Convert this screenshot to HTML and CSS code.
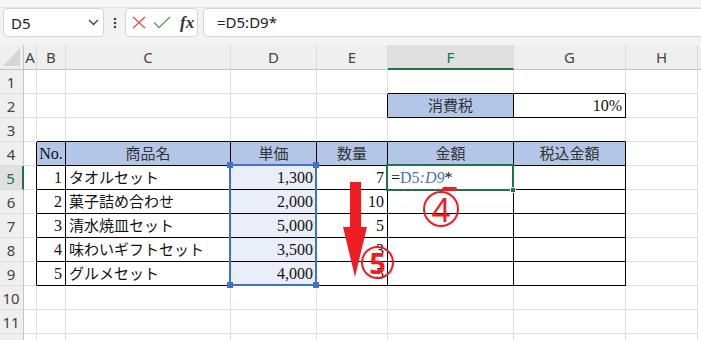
FILE: index.html
```html
<!DOCTYPE html>
<html lang="ja">
<head>
  <meta charset="UTF-8" />
  <meta name="viewport" content="width=device-width, initial-scale=1.0"/>
  <title>税込金額の計算</title>
  <link rel="stylesheet" href="styles.css">
</head>
<body>
  <div class="page">
    <div class="topstrip"></div>

    <!-- formula bar -->
    <div class="fbar">
      <div class="namebox">
        <span>D5</span>
        <svg width="11" height="7" viewBox="0 0 11 7"><polyline points="1,1 5.5,5.5 10,1" fill="none" stroke="#444" stroke-width="1.3"/></svg>
      </div>
      <div class="dots">
        <svg width="4" height="12" viewBox="0 0 4 12"><circle cx="2" cy="2" r="1.3" fill="#444"/><circle cx="2" cy="6" r="1.3" fill="#444"/><circle cx="2" cy="10" r="1.3" fill="#444"/></svg>
      </div>
      <div class="fxbox">
        <svg class="icon-x" width="14" height="13" viewBox="0 0 14 13"><path d="M1,1 L13,12 M13,1 L1,12" stroke="#e05555" stroke-width="1.4" fill="none"/></svg>
        <svg class="icon-ok" width="18" height="13" viewBox="0 0 18 13"><polyline points="1,6.5 6,11.5 17,1" stroke="#5ba85b" stroke-width="1.4" fill="none"/></svg>
        <span class="fx">fx</span>
      </div>
      <div class="formula">=D5:D9*</div>
    </div>

    <!-- sheet -->
    <div class="sheet">
      <div class="row head">
        <div class="corner"><svg width="18" height="19" viewBox="0 0 18 19"><polygon points="17,0 17,18 0,18" fill="#d6d6d6"/></svg></div>
        <div class="ch">A</div>
        <div class="ch">B</div>
        <div class="ch">C</div>
        <div class="ch">D</div>
        <div class="ch">E</div>
        <div class="ch on">F</div>
        <div class="ch">G</div>
        <div class="ch">H</div>
        <div class="ch end"></div>
      </div>

      <div class="row">
        <div class="rh">1</div>
        <div class="c"></div><div class="c"></div><div class="c"></div><div class="c"></div><div class="c"></div>
        <div class="c bb"></div><div class="c bb"></div><div class="c"></div><div class="c end"></div>
      </div>
      <div class="row">
        <div class="rh">2</div>
        <div class="c"></div><div class="c"></div><div class="c"></div><div class="c"></div><div class="c br"></div>
        <div class="c bt hd">消費税</div>
        <div class="c bt n">10%</div>
        <div class="c"></div><div class="c end"></div>
      </div>
      <div class="row">
        <div class="rh">3</div>
        <div class="c"></div>
        <div class="c bb"></div><div class="c bb"></div><div class="c bb"></div><div class="c bb"></div><div class="c bb"></div><div class="c bb"></div>
        <div class="c"></div><div class="c end"></div>
      </div>
      <div class="row">
        <div class="rh">4</div>
        <div class="c br"></div>
        <div class="c bt hd latin">No.</div>
        <div class="c bt hd">商品名</div>
        <div class="c bt hd">単価</div>
        <div class="c bt hd">数量</div>
        <div class="c bt hd">金額</div>
        <div class="c bt hd">税込金額</div>
        <div class="c"></div><div class="c end"></div>
      </div>
      <div class="row">
        <div class="rh on">5</div>
        <div class="c br"></div>
        <div class="c bt n">1</div>
        <div class="c bt t">タオルセット</div>
        <div class="c bt n sel">1,300</div>
        <div class="c bt n">7</div>
        <div class="c bt edit">=<span class="ref">D5<i>:D9</i></span>*</div>
        <div class="c bt"></div>
        <div class="c"></div><div class="c end"></div>
      </div>
      <div class="row">
        <div class="rh">6</div>
        <div class="c br"></div>
        <div class="c bt n">2</div>
        <div class="c bt t">菓子詰め合わせ</div>
        <div class="c bt n sel">2,000</div>
        <div class="c bt n">10</div>
        <div class="c bt"></div><div class="c bt"></div>
        <div class="c"></div><div class="c end"></div>
      </div>
      <div class="row">
        <div class="rh">7</div>
        <div class="c br"></div>
        <div class="c bt n">3</div>
        <div class="c bt t">清水焼皿セット</div>
        <div class="c bt n sel">5,000</div>
        <div class="c bt n">5</div>
        <div class="c bt"></div><div class="c bt"></div>
        <div class="c"></div><div class="c end"></div>
      </div>
      <div class="row">
        <div class="rh">8</div>
        <div class="c br"></div>
        <div class="c bt n">4</div>
        <div class="c bt t">味わいギフトセット</div>
        <div class="c bt n sel">3,500</div>
        <div class="c bt n">3</div>
        <div class="c bt"></div><div class="c bt"></div>
        <div class="c"></div><div class="c end"></div>
      </div>
      <div class="row">
        <div class="rh">9</div>
        <div class="c br"></div>
        <div class="c bt n">5</div>
        <div class="c bt t">グルメセット</div>
        <div class="c bt n sel">4,000</div>
        <div class="c bt n">5</div>
        <div class="c bt"></div><div class="c bt"></div>
        <div class="c"></div><div class="c end"></div>
      </div>
      <div class="row">
        <div class="rh">10</div>
        <div class="c"></div><div class="c"></div><div class="c"></div><div class="c"></div><div class="c"></div>
        <div class="c"></div><div class="c"></div><div class="c"></div><div class="c end"></div>
      </div>
      <div class="row">
        <div class="rh">11</div>
        <div class="c"></div><div class="c"></div><div class="c"></div><div class="c"></div><div class="c"></div>
        <div class="c"></div><div class="c"></div><div class="c"></div><div class="c end"></div>
      </div>
      <div class="row">
        <div class="rh">12</div>
        <div class="c"></div><div class="c"></div><div class="c"></div><div class="c"></div><div class="c"></div>
        <div class="c"></div><div class="c"></div><div class="c"></div><div class="c end"></div>
      </div>
    </div>

    <!-- selection + active cell -->
    <div class="selbox"></div>
    <div class="handle h1"></div>
    <div class="handle h2"></div>
    <div class="handle h3"></div>
    <div class="handle h4"></div>
    <div class="active"></div>
    <div class="fillh"></div>

    <!-- annotations -->
    <div class="dash"></div>
    <svg class="arrow" width="27" height="100" viewBox="0 0 27 100">
      <rect x="8" y="2" width="11" height="48" fill="#ee1d23"/>
      <polygon points="1,47 25,47 13,97" fill="#ee1d23"/>
    </svg>
    <div class="mark m4">4</div>
    <div class="mark m5">5</div>
  </div>
</body>
</html>
```

FILE: styles.css
```css
* {
  box-sizing: border-box;
}

body {
  margin: 0;
  background: #fff;
  overflow: hidden;
}

.page {
  position: relative;
  width: 701px;
  height: 340px;
  overflow: hidden;
  font-family: 'Noto Sans', sans-serif;
}

/* ---------- formula bar ---------- */
.topstrip {
  height: 8px;
  background: #f5f5f5;
  border-bottom: 1px solid #e2e2e2;
}

.fbar {
  display: flex;
  align-items: flex-start;
  height: 37px;
  padding: 0 0 8px 3px;
  background: #f3f3f3;
}

.namebox,
.fxbox,
.formula {
  height: 29px;
  background: #fff;
  border: 1px solid #d4d4d4;
  border-radius: 4px;
}

.namebox {
  width: 101px;
  display: flex;
  align-items: center;
  justify-content: space-between;
  padding: 0 4px 0 7px;
  font-size: 15px;
  color: #222;
}

.dots {
  width: 21px;
  height: 29px;
  display: flex;
  align-items: center;
  justify-content: center;
}

.fxbox {
  width: 73px;
  display: flex;
  align-items: center;
  padding-left: 6px;
}

.icon-ok {
  margin-left: 7px;
}

.fx {
  margin-left: 9px;
  font-family: 'Liberation Serif', serif;
  font-style: italic;
  font-weight: bold;
  font-size: 17px;
  color: #333;
}

.formula {
  flex: 1;
  margin-left: 5px;
  margin-right: -8px;
  padding-left: 13px;
  line-height: 27px;
  font-size: 15px;
  color: #222;
}

/* ---------- sheet ---------- */
.row {
  display: grid;
  grid-template-columns: 24px 13px 29px 165px 86px 71px 126px 112px 72px 1fr;
  height: 24px;
}

.row.head {
  height: 25px;
}

.corner,
.ch,
.rh {
  background: #efefef;
  color: #444;
  font-size: 15px;
  display: flex;
  align-items: center;
  justify-content: center;
}

.corner {
  border-right: 1px solid #c4c4c4;
  border-bottom: 1px solid #c4c4c4;
  align-items: flex-end;
  justify-content: flex-end;
  padding: 0 2px 2px 0;
}

.ch {
  border-right: 1px solid #dcdcdc;
  border-bottom: 1px solid #c4c4c4;
}

.ch.on {
  background: #e0e0e0;
  color: #217346;
  border-bottom: 2px solid #217346;
}

.rh {
  border-right: 1px solid #c4c4c4;
  border-bottom: 1px solid #dcdcdc;
  padding-right: 1px;
}

.rh.on {
  background: #e0e0e0;
  color: #217346;
  border-right: 2px solid #217346;
}

.c {
  border-right: 1px solid #e0e0e0;
  border-bottom: 1px solid #e0e0e0;
  display: flex;
  align-items: flex-end;
  padding: 0 3px 2px 3px;
  font-family: 'Liberation Serif', 'Noto Sans CJK JP', serif;
  font-size: 16px;
  line-height: 18px;
  color: #111;
  white-space: nowrap;
}

.end {
  border: none;
  background: #fff;
}

.ch.end {
  background: #efefef;
  border-bottom: 1px solid #c4c4c4;
}

/* black table borders */
.bt {
  border-right-color: #000;
  border-bottom-color: #000;
}

.bb {
  border-bottom-color: #000;
}

.br {
  border-right-color: #000;
}

.hd {
  background: #b4c6e7;
  justify-content: center;
  font-size: 15px;
  color: #333;
}

.hd.latin {
  font-size: 16px;
  color: #111;
}

.n {
  justify-content: flex-end;
}

.t {
  font-size: 15px;
  padding-left: 3px;
}

.sel {
  background: #e9eef8;
}

.edit {
  padding-left: 3px;
}

.ref {
  color: #3f72c8;
}

.ref i {
  font-style: italic;
}

/* ---------- selection overlays ---------- */
.selbox {
  position: absolute;
  left: 229px;
  top: 164px;
  width: 88px;
  height: 122px;
  border: 2px solid #3f72c8;
}

.handle {
  position: absolute;
  width: 6px;
  height: 6px;
  background: #3f72c8;
}

.h1 { left: 227px; top: 162px; }
.h2 { left: 313px; top: 162px; }
.h3 { left: 227px; top: 282px; }
.h4 { left: 313px; top: 282px; }

.active {
  position: absolute;
  left: 386px;
  top: 164px;
  width: 128px;
  height: 27px;
  border: 2px solid #217346;
}

.fillh {
  position: absolute;
  left: 510px;
  top: 187px;
  width: 6px;
  height: 6px;
  background: #217346;
  border: 1px solid #fff;
}

/* ---------- red annotations ---------- */
.dash {
  position: absolute;
  left: 442px;
  top: 187px;
  width: 15px;
  height: 4px;
  border-radius: 2px;
  background: #ee1d23;
}

.arrow {
  position: absolute;
  left: 342px;
  top: 180px;
}

.mark {
  position: absolute;
  display: flex;
  align-items: center;
  justify-content: center;
  border: 2px solid #ee1d23;
  border-radius: 50%;
  color: #ee1d23;
  font-family: 'Noto Sans', sans-serif;
}

.m4 {
  left: 423px;
  top: 191px;
  width: 36px;
  height: 36px;
  font-size: 33px;
  line-height: 1;
}

.m5 {
  left: 361px;
  top: 246px;
  width: 33px;
  height: 33px;
  font-size: 29px;
  font-weight: bold;
  line-height: 1;
}
```
